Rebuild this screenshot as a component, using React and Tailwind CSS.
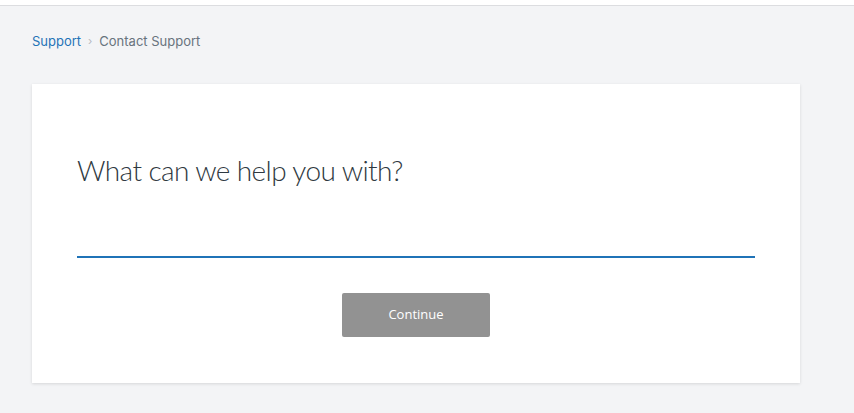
import React, { useState } from 'react';

export default function App() {
  const [topic, setTopic] = useState('');

  return (
    <div className="min-h-screen bg-[#f3f4f6] font-['Inter',sans-serif]">
      <div className="h-[6px] bg-white border-b border-[#dcdde0]" />

      <div className="pl-8 pr-[54px]">
        <nav className="flex items-center gap-[7px] pt-[27px] text-[13px] leading-4">
          <a href="#" className="text-[#1f73b7]">Support</a>
          <span className="text-[#b5b9bf] text-[11px]">›</span>
          <span className="text-[#68737d]">Contact Support</span>
        </nav>

        <div className="mt-[35px] bg-white shadow-[0_1px_3px_rgba(0,0,0,0.12)] pt-[70px] pb-[46px] px-[45px]">
          <h1 className="text-[28px] font-light tracking-[-0.6px] text-[#2f3941] leading-8 font-['Lato',sans-serif]">
            What can we help you with?
          </h1>
          <input
            value={topic}
            onChange={(e) => setTopic(e.target.value)}
            className="mt-[54px] block w-full h-[18px] border-b-2 border-[#1f73b7] outline-none bg-transparent"
          />
          <div className="flex justify-center mt-[35px]">
            <button className="w-[148px] h-[44px] bg-[#929292] text-white text-[13px] rounded-[2px] font-['Open_Sans',sans-serif]">
              Continue
            </button>
          </div>
        </div>
      </div>
    </div>
  );
}
